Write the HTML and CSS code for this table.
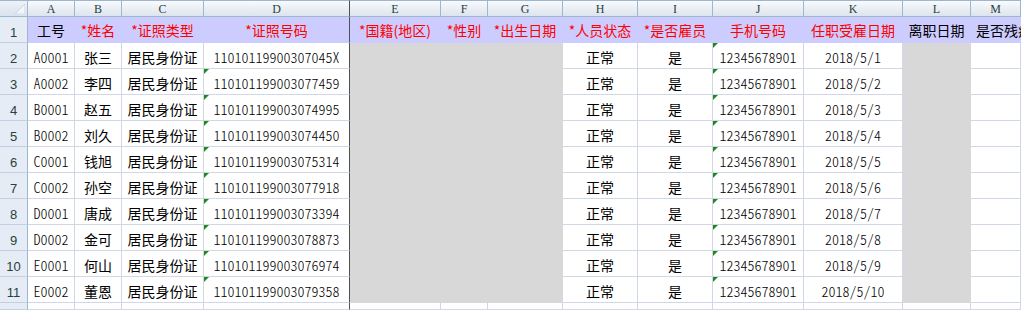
FILE: index.html
```html
<!DOCTYPE html>
<html lang="zh-CN">
<head>
<meta charset="utf-8">
<title>Sheet</title>
<link rel="stylesheet" href="styles.css">
</head>
<body>
<div class="sheet">
  <div class="corner"><svg width="10" height="10" viewBox="0 0 10 10"><polygon points="10,0 10,10 0,10" fill="#f3f6fa" stroke="#b8c8dc" stroke-width="0.6"/></svg></div>
  <div class="ch">A</div><div class="ch">B</div><div class="ch">C</div><div class="ch fz">D</div><div class="ch">E</div><div class="ch">F</div><div class="ch">G</div><div class="ch">H</div><div class="ch">I</div><div class="ch">J</div><div class="ch">K</div><div class="ch">L</div><div class="ch">M</div>

  <div class="rh">1</div>
  <div class="c hd">工号</div><div class="c hd red">*姓名</div><div class="c hd red">*证照类型</div><div class="c hd red fz">*证照号码</div><div class="c hd red">*国籍(地区)</div><div class="c hd red">*性别</div><div class="c hd red">*出生日期</div><div class="c hd red">*人员状态</div><div class="c hd red">*是否雇员</div><div class="c hd red">手机号码</div><div class="c hd red">任职受雇日期</div><div class="c hd">离职日期</div><div class="c hd left">是否残疾人</div>

  <div class="rh">2</div>
  <div class="c n">A0001</div><div class="c">张三</div><div class="c">居民身份证</div><div class="c n fz">11010119900307045X</div><div class="c g"></div><div class="c g"></div><div class="c g"></div><div class="c">正常</div><div class="c">是</div><div class="c n t">12345678901</div><div class="c n">2018/5/1</div><div class="c g"></div><div class="c"></div>

  <div class="rh">3</div>
  <div class="c n">A0002</div><div class="c">李四</div><div class="c">居民身份证</div><div class="c n fz t">110101199003077459</div><div class="c g"></div><div class="c g"></div><div class="c g"></div><div class="c">正常</div><div class="c">是</div><div class="c n t">12345678901</div><div class="c n">2018/5/2</div><div class="c g"></div><div class="c"></div>

  <div class="rh">4</div>
  <div class="c n">B0001</div><div class="c">赵五</div><div class="c">居民身份证</div><div class="c n fz t">110101199003074995</div><div class="c g"></div><div class="c g"></div><div class="c g"></div><div class="c">正常</div><div class="c">是</div><div class="c n t">12345678901</div><div class="c n">2018/5/3</div><div class="c g"></div><div class="c"></div>

  <div class="rh">5</div>
  <div class="c n">B0002</div><div class="c">刘久</div><div class="c">居民身份证</div><div class="c n fz t">110101199003074450</div><div class="c g"></div><div class="c g"></div><div class="c g"></div><div class="c">正常</div><div class="c">是</div><div class="c n t">12345678901</div><div class="c n">2018/5/4</div><div class="c g"></div><div class="c"></div>

  <div class="rh">6</div>
  <div class="c n">C0001</div><div class="c">钱旭</div><div class="c">居民身份证</div><div class="c n fz t">110101199003075314</div><div class="c g"></div><div class="c g"></div><div class="c g"></div><div class="c">正常</div><div class="c">是</div><div class="c n t">12345678901</div><div class="c n">2018/5/5</div><div class="c g"></div><div class="c"></div>

  <div class="rh">7</div>
  <div class="c n">C0002</div><div class="c">孙空</div><div class="c">居民身份证</div><div class="c n fz t">110101199003077918</div><div class="c g"></div><div class="c g"></div><div class="c g"></div><div class="c">正常</div><div class="c">是</div><div class="c n t">12345678901</div><div class="c n">2018/5/6</div><div class="c g"></div><div class="c"></div>

  <div class="rh">8</div>
  <div class="c n">D0001</div><div class="c">唐成</div><div class="c">居民身份证</div><div class="c n fz t">110101199003073394</div><div class="c g"></div><div class="c g"></div><div class="c g"></div><div class="c">正常</div><div class="c">是</div><div class="c n t">12345678901</div><div class="c n">2018/5/7</div><div class="c g"></div><div class="c"></div>

  <div class="rh">9</div>
  <div class="c n">D0002</div><div class="c">金可</div><div class="c">居民身份证</div><div class="c n fz t">110101199003078873</div><div class="c g"></div><div class="c g"></div><div class="c g"></div><div class="c">正常</div><div class="c">是</div><div class="c n t">12345678901</div><div class="c n">2018/5/8</div><div class="c g"></div><div class="c"></div>

  <div class="rh">10</div>
  <div class="c n">E0001</div><div class="c">何山</div><div class="c">居民身份证</div><div class="c n fz t">110101199003076974</div><div class="c g"></div><div class="c g"></div><div class="c g"></div><div class="c">正常</div><div class="c">是</div><div class="c n t">12345678901</div><div class="c n">2018/5/9</div><div class="c g"></div><div class="c"></div>

  <div class="rh">11</div>
  <div class="c n">E0002</div><div class="c">董恩</div><div class="c">居民身份证</div><div class="c n fz t">110101199003079358</div><div class="c g"></div><div class="c g"></div><div class="c g"></div><div class="c">正常</div><div class="c">是</div><div class="c n t">12345678901</div><div class="c n">2018/5/10</div><div class="c g"></div><div class="c"></div>

  <div class="rh"></div>
  <div class="c"></div><div class="c"></div><div class="c"></div><div class="c fz"></div><div class="c"></div><div class="c"></div><div class="c"></div><div class="c"></div><div class="c"></div><div class="c"></div><div class="c"></div><div class="c"></div><div class="c"></div>
</div>
</body>
</html>
```

FILE: styles.css
```css
html, body {
  margin: 0;
  padding: 0;
  background: #ffffff;
  overflow: hidden;
}

.sheet {
  display: grid;
  grid-template-columns: 28px 47px 47px 82px 146px 91px 47px 75px 75px 75px 91px 99px 68px 50px;
  grid-template-rows: 17px repeat(11, 26px) 7px;
  width: 1021px;
  font-family: "Noto Sans CJK SC", sans-serif;
  font-size: 14px;
  color: #000;
}

.sheet > div {
  box-sizing: border-box;
}

.corner {
  background: linear-gradient(#eef2f7, #d9e2ee);
  border-top: 1px solid #9eb6ce;
  border-right: 1px solid #9eb6ce;
  border-bottom: 1px solid #9eb6ce;
  display: flex;
  align-items: flex-end;
  justify-content: flex-end;
  padding: 0 2px 2px 0;
}

.corner svg {
  display: block;
}

.ch {
  background: linear-gradient(#f8fafc, #dde4ee);
  border-top: 1px solid #9eb6ce;
  border-right: 1px solid #9eb6ce;
  border-bottom: 1px solid #9eb6ce;
  color: #27413e;
  font-family: "Liberation Serif", serif;
  font-size: 12px;
  line-height: 1;
  display: flex;
  align-items: center;
  justify-content: center;
  padding-top: 1px;
}

.rh {
  background: #e6ecf5;
  border-right: 1px solid #9eb6ce;
  border-bottom: 1px solid #c3d0e0;
  color: #27413e;
  font-family: "Liberation Sans", sans-serif;
  font-size: 13px;
  line-height: 1;
  display: flex;
  align-items: flex-end;
  justify-content: center;
  padding-bottom: 3px;
}

.c {
  position: relative;
  border-right: 1px solid #d0d7e5;
  border-bottom: 1px solid #d0d7e5;
  display: flex;
  align-items: center;
  justify-content: center;
  white-space: nowrap;
  padding-top: 2px;
  line-height: 1;
}

.n {
  font-family: "Noto Sans CJK SC", sans-serif;
  font-size: 14px;
  font-weight: 300;
  font-feature-settings: "hwid";
}

.hd {
  background: #ccccff;
  border-right-color: #ccccff;
  border-bottom-color: #ccccff;
  padding-top: 0;
}

.red {
  color: #ff0000;
}

.left {
  justify-content: flex-start;
  padding-left: 5px;
  overflow: visible;
}

.g {
  background: #d8d8d8;
  border-right-color: #d8d8d8;
  border-bottom-color: #d8d8d8;
}

.fz {
  border-right-color: #505050;
}

.hd.fz {
  border-right-color: #505050;
}

.t::before {
  content: "";
  position: absolute;
  left: 0;
  top: 0;
  width: 0;
  height: 0;
  border-top: 5px solid #1f8b1f;
  border-right: 5px solid transparent;
}
```
